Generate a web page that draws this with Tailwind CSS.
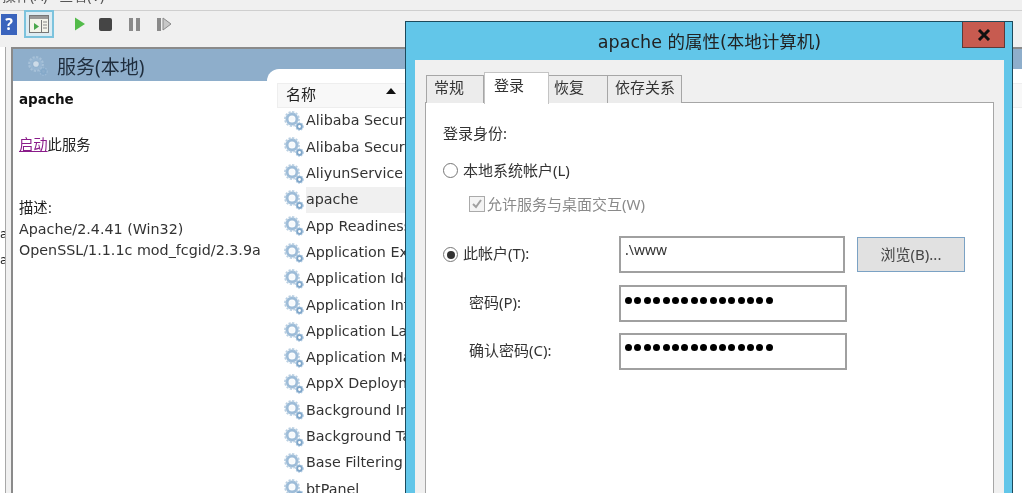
<!DOCTYPE html>
<html lang="zh">
<head>
<meta charset="utf-8">
<script src="https://cdn.jsdelivr.net/npm/@tailwindcss/browser@4"></script>
</head>
<body class="m-0">
<svg class="hidden" width="0" height="0"><defs>
<symbol id="gear" viewBox="0 0 20 20">
<circle cx="8" cy="8" r="5" fill="none" stroke="#9dbcd8" stroke-width="3"/>
<circle cx="8" cy="8" r="6.9" fill="none" stroke="#b9cfe2" stroke-width="2" stroke-dasharray="2.2 1.4"/>
<circle cx="8" cy="8" r="2.8" fill="#f7fafc"/>
<circle cx="15.5" cy="15.5" r="2.4" fill="none" stroke="#7fa6c9" stroke-width="2"/>
<circle cx="15.5" cy="15.5" r="3.7" fill="none" stroke="#a9c6e0" stroke-width="1.1" stroke-dasharray="1.5 1.2"/>
</symbol>
</defs></svg>
<div class="relative w-[1022px] h-[493px] overflow-hidden bg-[#f0f0f0] text-[15px] text-[#222] font-['Noto_Sans','Noto_Sans_CJK_SC',sans-serif] blur-[0.35px]">
  <!-- menu -->
  <div class="h-[11px] border-b border-[#cfcfcf] overflow-hidden">
    <div class="flex gap-[12px] pl-[2px] -mt-[14px] text-[14px] leading-[20px] text-[#555]"><span>操作(A)</span><span>查看(V)</span></div>
  </div>
  <!-- toolbar -->
  <div class="h-[36px] pb-[10px] flex items-center">
    <div class="ml-[1px] w-[16px] h-[21px] bg-[#3a64bd] text-white font-bold text-[16px] leading-[21px] text-center">?</div>
    <div class="ml-[7px] w-[30px] h-[28px] border-2 border-[#7cc3dd] bg-[#dcecf3] flex items-center justify-center">
      <svg width="20" height="18" viewBox="0 0 20 18"><rect x="0.5" y="0.5" width="19" height="17" fill="#f4f4ea" stroke="#777"/><rect x="1" y="1" width="18" height="3" fill="#999"/><rect x="12" y="5" width="1" height="12" fill="#777"/><path d="M5 8l5 3.5-5 3.5z" fill="#4aa84a"/><path d="M14 7h4M14 10h4M14 13h4" stroke="#888"/></svg>
    </div>
    <svg class="ml-[20px]" width="11" height="14" viewBox="0 0 11 14"><path d="M1 0.5l10 6.5-10 6.5z" fill="#53bb4a"/></svg>
    <div class="ml-[14px] w-[13px] h-[13px] rounded-[2px] bg-[#454545]"></div>
    <div class="ml-[17px] flex gap-[3px]"><div class="w-[4px] h-[13px] bg-[#8a8a8a]"></div><div class="w-[4px] h-[13px] bg-[#8a8a8a]"></div></div>
    <div class="ml-[17px] flex items-center gap-[1px]"><div class="w-[4px] h-[13px] bg-[#8a8a8a]"></div><svg width="10" height="14" viewBox="0 0 10 14"><path d="M1 1l8 6-8 6z" fill="#c8c8c8" stroke="#8a8a8a"/></svg></div>
  </div>
  <!-- body -->
  <div class="flex h-[446px]">
    <div class="w-[6px] bg-white border-r border-[#a8a8a8] pt-[174px] text-[12px] leading-[26px] -mr-[1px] overflow-hidden text-right font-['DejaVu_Sans',sans-serif]"><div>a</div><div>a</div></div>
    <div class="w-[6px]"></div>
    <div class="flex-1 border-l-2 border-t-2 border-[#8a8a8a] bg-white flex flex-col">
      <div class="h-[32px] bg-[#8eaecb] flex items-start pl-[15px] pt-[7px] gap-[9px]">
        <svg width="20" height="20" class="opacity-60"><use href="#gear"/></svg>
        <span class="text-[19px] leading-[24px] -mt-[1px] text-[#1f2d3d]">服务(本地)</span>
      </div>
      <div class="flex-1 flex">
        <div class="w-[254px] pl-[6px] pt-[8px] font-['DejaVu_Sans','Noto_Sans_CJK_SC',sans-serif] text-[14.3px]">
          <div class="font-bold leading-[20px] text-[#111] text-[13.5px]">apache</div>
          <div class="mt-[26px] leading-[20px]"><a class="text-[#8a1c8a] underline">启动</a>此服务</div>
          <div class="mt-[43px] leading-[20px]">描述:</div>
          <div class="mt-[1px] leading-[21px] text-[#333]">Apache/2.4.41 (Win32)<br>OpenSSL/1.1.1c mod_fcgid/2.3.9a</div>
        </div>
        <div class="flex-1 relative">
          <div class="absolute left-0 right-0 top-[-12px] bottom-0 bg-white rounded-tl-[12px] pl-[10px] pt-[14px]">
            <div class="h-[25px] flex items-center bg-[#f8f8f8] border-t border-b border-l border-[#eeeeee] pl-[8px]">
              <span class="leading-[20px] -mt-[3px]">名称</span>
              <svg class="ml-[70px] mb-[9px]" width="10" height="6" viewBox="0 0 10 6"><path d="M5 0l5 6H0z" fill="#111"/></svg>
            </div>
            <div class="flex flex-col pl-[7px] text-[#333] text-[14.3px] font-['DejaVu_Sans',sans-serif]">
              <div class="h-[26.3px] flex items-center gap-[2px]"><svg width="20" height="20"><use href="#gear"/></svg><span>Alibaba Security Aegis Detection</span></div>
              <div class="h-[26.3px] flex items-center gap-[2px]"><svg width="20" height="20"><use href="#gear"/></svg><span>Alibaba Security Aegis Update</span></div>
              <div class="h-[26.3px] flex items-center gap-[2px]"><svg width="20" height="20"><use href="#gear"/></svg><span>AliyunService</span></div>
              <div class="h-[26.3px] flex items-center gap-[2px]"><svg width="20" height="20"><use href="#gear"/></svg><span class="w-[200px] h-full flex items-center bg-[#f0f0f0]">apache</span></div>
              <div class="h-[26.3px] flex items-center gap-[2px]"><svg width="20" height="20"><use href="#gear"/></svg><span>App Readiness</span></div>
              <div class="h-[26.3px] flex items-center gap-[2px]"><svg width="20" height="20"><use href="#gear"/></svg><span>Application Experience</span></div>
              <div class="h-[26.3px] flex items-center gap-[2px]"><svg width="20" height="20"><use href="#gear"/></svg><span>Application Identity</span></div>
              <div class="h-[26.3px] flex items-center gap-[2px]"><svg width="20" height="20"><use href="#gear"/></svg><span>Application Information</span></div>
              <div class="h-[26.3px] flex items-center gap-[2px]"><svg width="20" height="20"><use href="#gear"/></svg><span>Application Layer Gateway</span></div>
              <div class="h-[26.3px] flex items-center gap-[2px]"><svg width="20" height="20"><use href="#gear"/></svg><span>Application Management</span></div>
              <div class="h-[26.3px] flex items-center gap-[2px]"><svg width="20" height="20"><use href="#gear"/></svg><span>AppX Deployment</span></div>
              <div class="h-[26.3px] flex items-center gap-[2px]"><svg width="20" height="20"><use href="#gear"/></svg><span>Background Intelligent</span></div>
              <div class="h-[26.3px] flex items-center gap-[2px]"><svg width="20" height="20"><use href="#gear"/></svg><span>Background Tasks</span></div>
              <div class="h-[26.3px] flex items-center gap-[2px]"><svg width="20" height="20"><use href="#gear"/></svg><span>Base Filtering Engine</span></div>
              <div class="h-[26.3px] flex items-center gap-[2px]"><svg width="20" height="20"><use href="#gear"/></svg><span>btPanel</span></div>
            </div>
          </div>
        </div>
      </div>
    </div>
  </div>
  <!-- dialog window -->
  <div class="absolute left-[405px] top-[21px] w-[608px] h-[480px] bg-[#62c6e9] border border-[#1c4a5c] pl-[9px] pr-[8px] flex flex-col">
    <div class="h-[38px] shrink-0 flex justify-center items-center text-[17.5px] text-[#222] font-['DejaVu_Sans','Noto_Sans_CJK_SC',sans-serif] relative">
      <span class="mt-[2px]">apache 的属性(本地计算机)</span>
      <div class="absolute right-[-1px] top-0 w-[43px] h-[26px] bg-[#c75b50] border border-[#5c3a3a] border-t-0 flex items-center justify-center">
        <svg width="14" height="12" viewBox="0 0 14 12"><path d="M2 1l10 10M12 1L2 11" stroke="#111" stroke-width="3"/></svg>
      </div>
    </div>
    <div class="flex-1 bg-[#f0f0f0] pl-[10px] pr-[10px] pt-[11px]">
      <div class="flex items-end h-[32px] pl-[1px] text-[#333] relative z-10 -mb-[1px]">
        <div class="w-[58px] h-[28px] bg-[#ececec] border border-[#a6a6a6] border-b-0 flex items-center pl-[7px] pb-[5px]">常规</div>
        <div class="w-[65px] h-[32px] -mb-[1px] bg-white border border-[#c4c4c4] border-b-0 flex items-center pl-[9px] pb-[7px]">登录</div>
        <div class="w-[59px] h-[28px] bg-[#ececec] border-t border-r border-[#a6a6a6] flex items-center pl-[5px] pb-[5px]">恢复</div>
        <div class="w-[74px] h-[28px] bg-[#ececec] border-t border-r border-[#a6a6a6] flex items-center pl-[7px] pb-[5px]">依存关系</div>
      </div>
      <div class="h-[400px] bg-white border border-[#a6a6a6] pl-[17px] pt-[20px] text-[#333]">
        <div class="h-[20px] leading-[20px]">登录身份:</div>
        <div class="mt-[17px] h-[20px] flex items-center gap-[5px]">
          <span class="w-[15px] h-[15px] rounded-full border border-[#777] bg-white"></span><span>本地系统帐户(L)</span>
        </div>
        <div class="mt-[14px] ml-[26px] h-[20px] flex items-center gap-[2px] text-[#8a8a8a]">
          <span class="w-[16px] h-[16px] border border-[#aaa] bg-[#f4f4f4] flex items-center justify-center"><svg width="12" height="12" viewBox="0 0 12 12"><path d="M2 6l3 3 5-7" fill="none" stroke="#a0a0a0" stroke-width="2"/></svg></span><span>允许服务与桌面交互(W)</span>
        </div>
        <div class="mt-[22px] flex items-center h-[37px]">
          <div class="w-[176px] flex items-center gap-[5px]">
            <span class="w-[15px] h-[15px] rounded-full border border-[#777] flex items-center justify-center"><span class="w-[8px] h-[8px] rounded-full bg-[#333]"></span></span><span class="pb-[3px]">此帐户(T):</span>
          </div>
          <div class="w-[226px] h-[37px] border-2 border-[#a0a0a0] pl-[4px] pt-[2px] leading-[20px] text-[14px]">.\www</div>
          <div class="ml-[12px] w-[108px] h-[35px] border border-[#7ba2c4] bg-[#e1e1e1] flex items-center justify-center text-[#444]">浏览(B)...</div>
        </div>
        <div class="mt-[12px] flex items-center h-[37px]">
          <div class="w-[176px] pl-[26px] pb-[2px]">密码(P):</div>
          <div class="w-[228px] h-[37px] border-2 border-[#a0a0a0] pl-[4px] pb-[6px] flex items-center gap-[2.4px]" aria-label="password">
            <i class="w-[7px] h-[7px] rounded-full bg-black"></i><i class="w-[7px] h-[7px] rounded-full bg-black"></i><i class="w-[7px] h-[7px] rounded-full bg-black"></i><i class="w-[7px] h-[7px] rounded-full bg-black"></i><i class="w-[7px] h-[7px] rounded-full bg-black"></i><i class="w-[7px] h-[7px] rounded-full bg-black"></i><i class="w-[7px] h-[7px] rounded-full bg-black"></i><i class="w-[7px] h-[7px] rounded-full bg-black"></i><i class="w-[7px] h-[7px] rounded-full bg-black"></i><i class="w-[7px] h-[7px] rounded-full bg-black"></i><i class="w-[7px] h-[7px] rounded-full bg-black"></i><i class="w-[7px] h-[7px] rounded-full bg-black"></i><i class="w-[7px] h-[7px] rounded-full bg-black"></i><i class="w-[7px] h-[7px] rounded-full bg-black"></i><i class="w-[7px] h-[7px] rounded-full bg-black"></i><i class="w-[7px] h-[7px] rounded-full bg-black"></i>
          </div>
        </div>
        <div class="mt-[11px] flex items-center h-[37px]">
          <div class="w-[176px] pl-[26px] pb-[2px]">确认密码(C):</div>
          <div class="w-[228px] h-[37px] border-2 border-[#a0a0a0] pl-[4px] pb-[8px] flex items-center gap-[2.4px]">
            <i class="w-[7px] h-[7px] rounded-full bg-black"></i><i class="w-[7px] h-[7px] rounded-full bg-black"></i><i class="w-[7px] h-[7px] rounded-full bg-black"></i><i class="w-[7px] h-[7px] rounded-full bg-black"></i><i class="w-[7px] h-[7px] rounded-full bg-black"></i><i class="w-[7px] h-[7px] rounded-full bg-black"></i><i class="w-[7px] h-[7px] rounded-full bg-black"></i><i class="w-[7px] h-[7px] rounded-full bg-black"></i><i class="w-[7px] h-[7px] rounded-full bg-black"></i><i class="w-[7px] h-[7px] rounded-full bg-black"></i><i class="w-[7px] h-[7px] rounded-full bg-black"></i><i class="w-[7px] h-[7px] rounded-full bg-black"></i><i class="w-[7px] h-[7px] rounded-full bg-black"></i><i class="w-[7px] h-[7px] rounded-full bg-black"></i><i class="w-[7px] h-[7px] rounded-full bg-black"></i><i class="w-[7px] h-[7px] rounded-full bg-black"></i>
          </div>
        </div>
      </div>
    </div>
  </div>
</div>
</body>
</html>
